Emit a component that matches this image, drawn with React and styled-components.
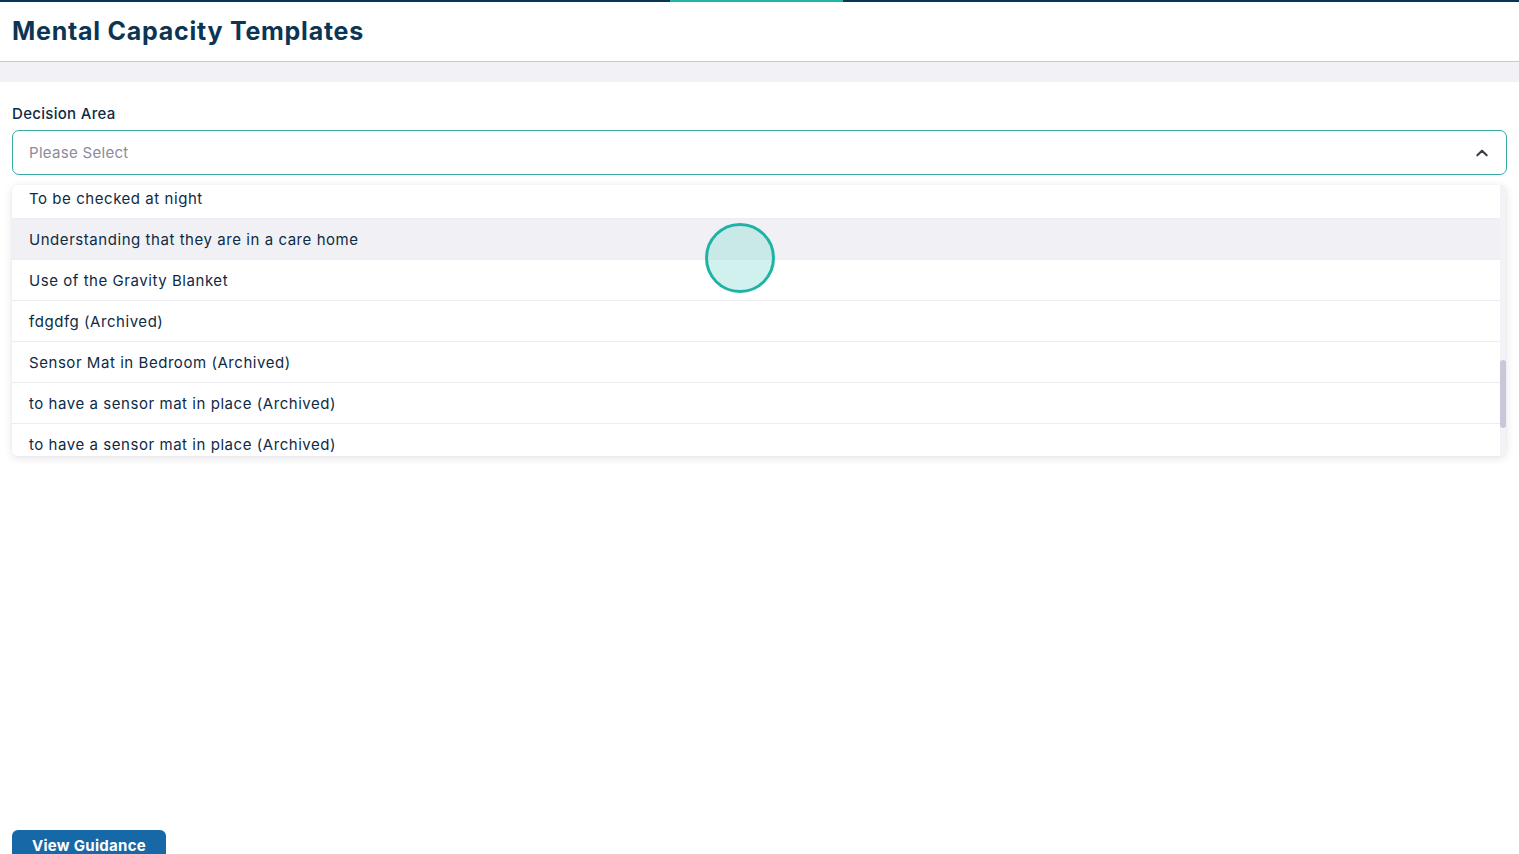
import React, { useLayoutEffect, useRef } from "react";
import styled, { createGlobalStyle } from "styled-components";

const GlobalStyle = createGlobalStyle`
  html, body { margin: 0; padding: 0; background: #ffffff; }
  body { font-family: "Inter", "Open Sans", "Liberation Sans", sans-serif; color: #0d2b45; }
  * { box-sizing: border-box; }
`;

const Page = styled.div`
  position: relative;
  width: 1519px;
  height: 854px;
  overflow: hidden;
  display: flex;
  flex-direction: column;
`;

const TopLine = styled.div`
  height: 2px;
  background: #0b3554;
  display: flex;
  justify-content: flex-start;
`;

const TopAccent = styled.div`
  margin-left: 670px;
  width: 173px;
  height: 2px;
  background: #1fb5a8;
`;

const Header = styled.header`
  height: 60px;
  display: flex;
  align-items: center;
  padding: 0 12px 2px;
  border-bottom: 1px solid #c9c9d6;
`;

const Title = styled.h1`
  margin: 0;
  font-size: 25px;
  font-weight: 700;
  color: #0b3554;
  letter-spacing: 0.75px;
`;

const Band = styled.div`
  height: 20px;
  background: #f1f1f6;
`;

const Content = styled.main`
  flex: 1;
  padding: 22px 12px 0;
  display: flex;
  flex-direction: column;
`;

const Label = styled.label`
  font-size: 15px;
  font-weight: 500;
  color: #0d2b45;
  margin-bottom: 6px;
  line-height: 20px;
  letter-spacing: 0.3px;
`;

const Field = styled.div`
  position: relative;
`;

const SelectBox = styled.div`
  height: 45px;
  border: 1px solid #3aa9a1;
  border-radius: 7px;
  display: flex;
  align-items: center;
  justify-content: space-between;
  padding: 0 16px 0 16px;
  background: #fff;
`;

const Placeholder = styled.span`
  font-size: 15px;
  color: #8b8b9c;
  letter-spacing: 0.3px;
`;

const Menu = styled.div`
  position: absolute;
  top: 55px;
  left: 0;
  right: 1px;
  height: 271px;
  background: #fff;
  border-radius: 6px;
  box-shadow: 0 2px 8px rgba(30, 30, 60, 0.12), 0 0 1px rgba(30, 30, 60, 0.12);
  overflow: hidden;
  z-index: 2;
  display: flex;
`;

const MenuList = styled.div`
  flex: 1;
  height: 100%;
  overflow-y: scroll;
  scrollbar-width: none;
  &::-webkit-scrollbar { display: none; }
`;

const ScrollTrack = styled.div`
  position: relative;
  width: 6px;
  height: 100%;
  background: #f3f3f7;
`;

const ScrollThumb = styled.div`
  position: absolute;
  left: 0;
  width: 6px;
  border-radius: 3px;
  background: #c8c8da;
`;

const Option = styled.div`
  height: 41px;
  flex-shrink: 0;
  display: flex;
  align-items: center;
  padding: 0 17px;
  font-size: 15px;
  letter-spacing: 0.55px;
  color: #0d2b45;
  border-bottom: 1px solid #ececf2;
  background: ${(p) => (p.$active ? "#f1f1f5" : "#fff")};
`;

const Footer = styled.div`
  padding: 0 12px;
  height: 24px;
  display: flex;
`;

const GuidanceButton = styled.button`
  width: 154px;
  height: 32px;
  border: none;
  border-radius: 6px;
  background: #1768a6;
  color: #fff;
  font-family: inherit;
  font-size: 15px;
  font-weight: 700;
  letter-spacing: 0.3px;
  display: flex;
  justify-content: center;
  padding-top: 6px;
  cursor: pointer;
`;

const Touch = styled.div`
  position: absolute;
  left: 705px;
  top: 223px;
  width: 70px;
  height: 70px;
  border-radius: 50%;
  border: 3px solid #1fb3a6;
  background: rgba(145, 222, 218, 0.42);
  z-index: 5;
  pointer-events: none;
`;

const Chevron = () => (
  <svg width="16" height="16" viewBox="0 0 24 24" fill="none" stroke="#3d3d47" strokeWidth="3.2" strokeLinecap="round" strokeLinejoin="round">
    <polyline points="5 15.5 12 8.5 19 15.5" />
  </svg>
);

const options = [
  "Access to the community",
  "Administration of medication",
  "Bed rails",
  "Choosing what to eat",
  "Consent to care and support",
  "Covert medication",
  "Door sensor",
  "Finances",
  "Personal care",
  "Photographs",
  "Receiving a COVID-19 vaccine",
  "Receiving the flu vaccination",
  "Residing at the care home",
  "Sharing information",
  "Smoking",
  "Staying in a locked environment",
  "Taking medication",
  "To be checked at night",
  "Understanding that they are in a care home",
  "Use of the Gravity Blanket",
  "fdgdfg (Archived)",
  "Sensor Mat in Bedroom (Archived)",
  "to have a sensor mat in place (Archived)",
  "to have a sensor mat in place (Archived)",
  "Use of CCTV (Archived)",
  "Wheelchair lap belt (Archived)",
];

const ROW = 41;
const VIEW = 271;
const SCROLL = 17 * ROW + 7;

export default function App() {
  const listRef = useRef(null);
  useLayoutEffect(() => {
    if (listRef.current) listRef.current.scrollTop = SCROLL;
  }, []);
  const total = options.length * ROW;
  const thumbH = 68;
  const thumbTop = 175;
  return (
    <>
      <GlobalStyle />
      <Page>
        <TopLine>
          <TopAccent />
        </TopLine>
        <Header>
          <Title>Mental Capacity Templates</Title>
        </Header>
        <Band />
        <Content>
          <Label>Decision Area</Label>
          <Field>
            <SelectBox>
              <Placeholder>Please Select</Placeholder>
              <Chevron />
            </SelectBox>
            <Menu>
              <MenuList ref={listRef} data-total={total}>
                {options.map((o, i) => (
                  <Option key={i} $active={i === 18}>
                    {o}
                  </Option>
                ))}
              </MenuList>
              <ScrollTrack>
                <ScrollThumb style={{ top: thumbTop, height: thumbH }} />
              </ScrollTrack>
            </Menu>
          </Field>
        </Content>
        <Footer>
          <GuidanceButton>View Guidance</GuidanceButton>
        </Footer>
        <Touch />
      </Page>
    </>
  );
}
